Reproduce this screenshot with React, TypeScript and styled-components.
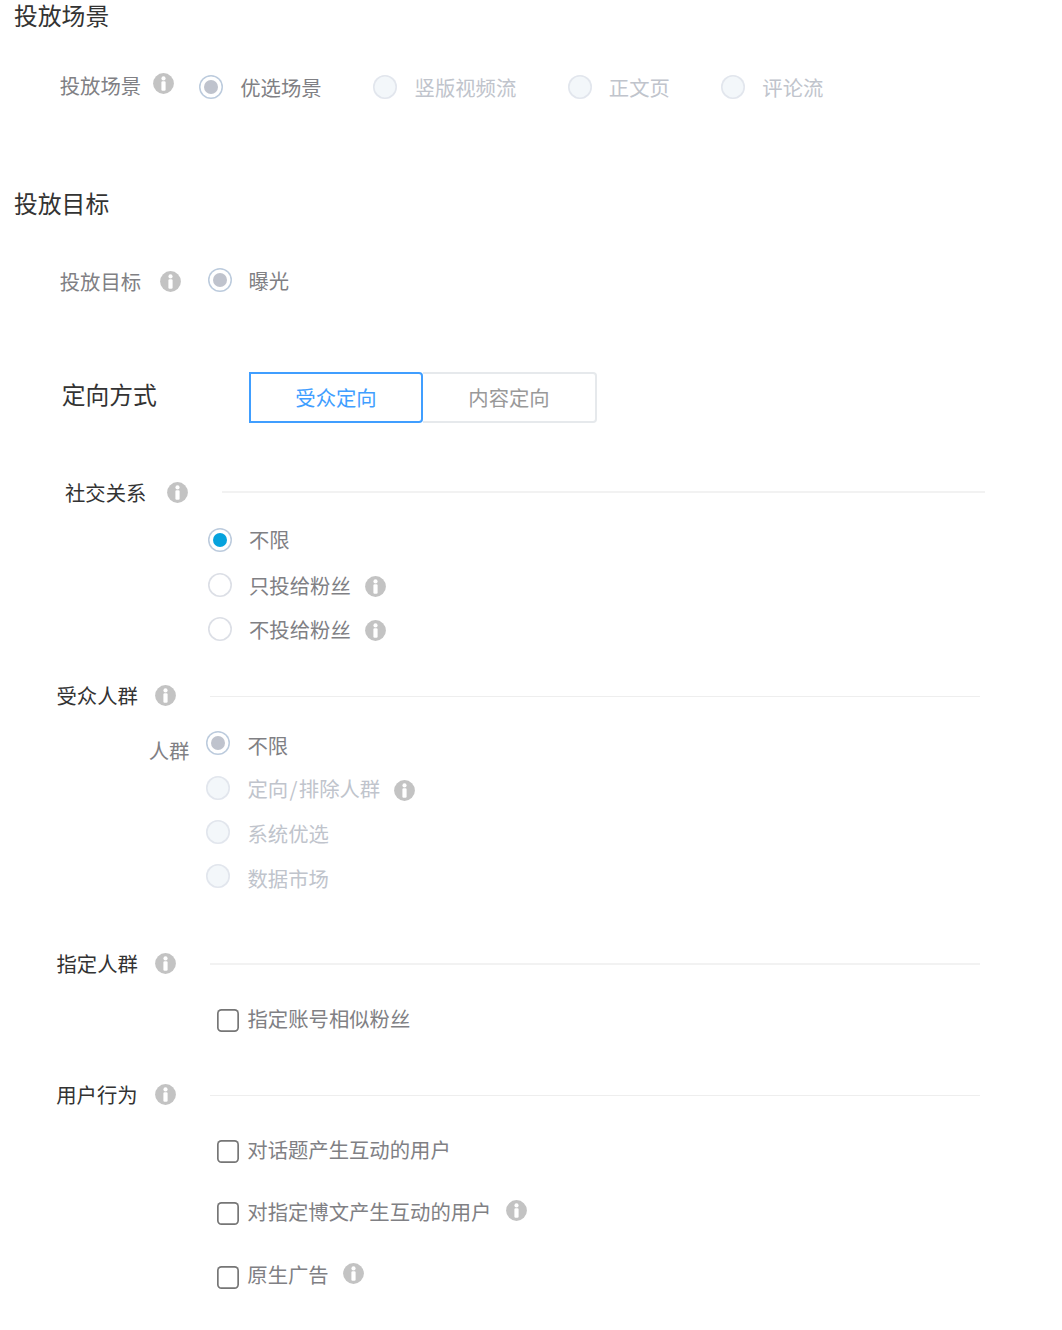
import React from 'react';
import styled, { createGlobalStyle, css } from 'styled-components';

type TipProps = { top: number; left: number };

const Tip = ({ top, left }: TipProps) => (
  <TipIcon viewBox="0 0 21 21" $top={top} $left={left}>
    <circle cx="10.5" cy="10.5" r="10.4" fill="#c3c3c3" />
    <circle cx="10.5" cy="5.4" r="2.1" fill="#fff" />
    <rect x="8.4" y="8.3" width="4.2" height="9.4" rx="1.2" fill="#fff" />
  </TipIcon>
);

export default function App() {
  return (
    <>
      <GlobalStyle />
      <Page>
        <Row $height={66}>
          <Title $top={1} $left={14}>投放场景</Title>
        </Row>
        <Row $height={114}>
          <LabelCell $width={199}>
            <Text $top={4} $left={59.7}>投放场景</Text>
            <Tip top={7} left={12.3} />
          </LabelCell>
          <Option>
            <Radio name="scene" $top={9} defaultChecked disabled />
            <Text $top={6} $left={17.2}>优选场景</Text>
          </Option>
          <Option $left={51.5}>
            <Radio name="scene" $top={9} disabled />
            <Text $top={6} $left={17.5} $tone="muted">竖版视频流</Text>
          </Option>
          <Option $left={51.5}>
            <Radio name="scene" $top={9} disabled />
            <Text $top={6} $left={17} $tone="muted">正文页</Text>
          </Option>
          <Option $left={51}>
            <Radio name="scene" $top={9} disabled />
            <Text $top={6} $left={17.5} $tone="muted">评论流</Text>
          </Option>
        </Row>

        <Row $height={84}>
          <Title $top={9} $left={14}>投放目标</Title>
        </Row>
        <Row $height={96}>
          <LabelCell $width={208}>
            <Text $top={2} $left={59.7}>投放目标</Text>
            <Tip top={7} left={19.2} />
          </LabelCell>
          <Option>
            <Radio name="goal" $top={4} defaultChecked disabled />
            <Text $top={1} $left={16.5}>曝光</Text>
          </Option>
        </Row>

        <Row $height={110}>
          <LabelCell $width={249}>
            <Title $top={20} $left={61.7}>定向方式</Title>
          </LabelCell>
          <Tabs>
            <Tab type="button" $active>受众定向</Tab>
            <Tab type="button">内容定向</Tab>
          </Tabs>
        </Row>

        <Row $height={54}>
          <LabelCell $width={222}>
            <Text $top={7} $left={65} $tone="dark">社交关系</Text>
            <Tip top={12} left={20.7} />
          </LabelCell>
          <Divider $top={21} $width={763} />
        </Row>
        <Row $height={46}>
          <Option $left={208}>
            <Radio name="relation" $top={4} defaultChecked />
            <Text $top={0} $left={17}>不限</Text>
          </Option>
        </Row>
        <Row $height={44}>
          <Option $left={208}>
            <Radio name="relation" $top={3} />
            <Text $top={0} $left={17}>只投给粉丝</Text>
            <Tip top={6} left={14.2} />
          </Option>
        </Row>
        <Row $height={62}>
          <Option $left={208}>
            <Radio name="relation" $top={3} />
            <Text $top={0} $left={17}>不投给粉丝</Text>
            <Tip top={6} left={14.2} />
          </Option>
        </Row>

        <Row $height={54}>
          <LabelCell $width={210}>
            <Text $top={4} $left={56.5} $tone="dark">受众人群</Text>
            <Tip top={9} left={17.2} />
          </LabelCell>
          <Divider $top={19.5} $width={770} $thin />
        </Row>
        <Row $height={44}>
          <LabelCell $width={206}>
            <Text $top={5} $left={148.7}>人群</Text>
          </LabelCell>
          <Option>
            <Radio name="crowd" $top={1} defaultChecked disabled />
            <Text $top={0} $left={17.5}>不限</Text>
          </Option>
        </Row>
        <Row $height={44}>
          <Option $left={206}>
            <Radio name="crowd" $top={2} disabled />
            <Text $top={-1} $left={17.5} $tone="muted">
              定向<Slash>/</Slash>排除人群
            </Text>
            <Tip top={6} left={13.8} />
          </Option>
        </Row>
        <Row $height={44}>
          <Option $left={206}>
            <Radio name="crowd" $top={2} disabled />
            <Text $top={0} $left={17.5} $tone="muted">系统优选</Text>
          </Option>
        </Row>
        <Row $height={82}>
          <Option $left={206}>
            <Radio name="crowd" $top={2} disabled />
            <Text $top={1} $left={17.5} $tone="muted">数据市场</Text>
          </Option>
        </Row>

        <Row $height={54}>
          <LabelCell $width={210}>
            <Text $top={4} $left={56.5} $tone="dark">指定人群</Text>
            <Tip top={9} left={17.2} />
          </LabelCell>
          <Divider $top={19} $width={770} />
        </Row>
        <Row $height={77}>
          <Option $left={216.5}>
            <Checkbox $top={11} />
            <Text $top={5} $left={8.5}>指定账号相似粉丝</Text>
          </Option>
        </Row>

        <Row $height={54}>
          <LabelCell $width={210}>
            <Text $top={4} $left={56.2} $tone="dark">用户行为</Text>
            <Tip top={9} left={17.5} />
          </LabelCell>
          <Divider $top={19.5} $width={770} $thin />
        </Row>
        <Row $height={62}>
          <Option $left={216.5}>
            <Checkbox $top={11} />
            <Text $top={5} $left={8.3}>对话题产生互动的用户</Text>
          </Option>
        </Row>
        <Row $height={63}>
          <Option $left={216.5}>
            <Checkbox $top={11} />
            <Text $top={4.5} $left={8.3}>对指定博文产生互动的用户</Text>
            <Tip top={9} left={14.7} />
          </Option>
        </Row>
        <Row $height={76}>
          <Option $left={216.5}>
            <Checkbox $top={12} />
            <Text $top={4.5} $left={8.3}>原生广告</Text>
            <Tip top={9} left={14} />
          </Option>
        </Row>
      </Page>
    </>
  );
}

const GlobalStyle = createGlobalStyle`
  * {
    box-sizing: border-box;
  }

  body {
    margin: 0;
    background-color: #fff;
    font-family: 'Noto Sans CJK SC', sans-serif;
  }
`;

const tones = {
  dark: '#333',
  normal: '#808084',
  muted: '#c0c4cc',
};

type Offset = { $top?: number; $left?: number };

const offset = css<Offset>`
  margin-top: ${({ $top = 0 }) => $top}px;
  margin-left: ${({ $left = 0 }) => $left}px;
`;

const Page = styled.main`
  display: flex;
  flex-direction: column;
  width: 1062px;
  height: 1330px;
`;

const Row = styled.div<{ $height: number }>`
  display: flex;
  align-items: flex-start;
  flex-shrink: 0;
  height: ${({ $height }) => $height}px;
`;

const LabelCell = styled.div<{ $width: number }>`
  display: flex;
  align-items: flex-start;
  flex-shrink: 0;
  width: ${({ $width }) => $width}px;
`;

const Option = styled.label<Offset>`
  ${offset}
  display: flex;
  align-items: flex-start;
`;

const Title = styled.h2<Offset>`
  font-size: 23.8px;
  font-weight: 400;
  line-height: 28px;
  color: #333;
  white-space: nowrap;
  margin-bottom: 0;
  ${offset}
`;

const Text = styled.span<Offset & { $tone?: keyof typeof tones }>`
  ${offset}
  font-size: 20.35px;
  line-height: 30px;
  color: ${({ $tone = 'normal' }) => tones[$tone]};
  white-space: nowrap;
`;

const Slash = styled.span`
  margin: 0 1.3px;
`;

const TipIcon = styled.svg<Offset>`
  ${offset}
  flex-shrink: 0;
  width: 21px;
  height: 21px;
`;

const Radio = styled.input.attrs({ type: 'radio' })<Offset>`
  appearance: none;
  display: grid;
  place-content: center;
  flex-shrink: 0;
  width: 24px;
  height: 24px;
  margin: 0;
  ${offset}
  border-radius: 50%;
  background-color: #fff;
  box-shadow: inset 0 0 0 1.6px #dcdfe6;

  &:disabled {
    background-color: #f3f7fa;
    box-shadow: inset 0 0 0 1.6px #e2e6ed;
  }

  &:checked {
    background-color: #fff;
    box-shadow: inset 0 0 0 1.5px #bccbdd;
  }

  &:checked::before {
    content: '';
    width: 14px;
    height: 14px;
    border-radius: 50%;
    background-color: #05a2dd;
  }

  &:checked:disabled::before {
    background-color: #bfc3cd;
  }
`;

const Checkbox = styled.input.attrs({ type: 'checkbox' })<Offset>`
  appearance: none;
  flex-shrink: 0;
  width: 22.5px;
  height: 22.5px;
  margin: 0;
  ${offset}
  border-radius: 4.5px;
  background-color: #fff;
  box-shadow: inset 0 0 0 1.7px #767676;
`;

const Divider = styled.div<Offset & { $width: number; $thin?: boolean }>`
  ${offset}
  width: ${({ $width }) => $width}px;
  height: ${({ $thin }) => ($thin ? 1.5 : 2)}px;
  background-color: ${({ $thin }) => ($thin ? '#eee' : '#f2f2f2')};
`;

const Tabs = styled.div`
  display: flex;
  margin-top: 12px;
`;

const Tab = styled.button<{ $active?: boolean }>`
  width: 174px;
  height: 51px;
  padding: 0 0 1px;
  border: 2px solid #e6e9ec;
  border-left: none;
  border-radius: 0 4px 4px 0;
  background-color: #fff;
  font-family: inherit;
  font-size: 20.35px;
  color: #999;

  ${({ $active }) =>
    $active &&
    css`
      border: 2px solid #409eff;
      color: #409eff;
    `}
`;
